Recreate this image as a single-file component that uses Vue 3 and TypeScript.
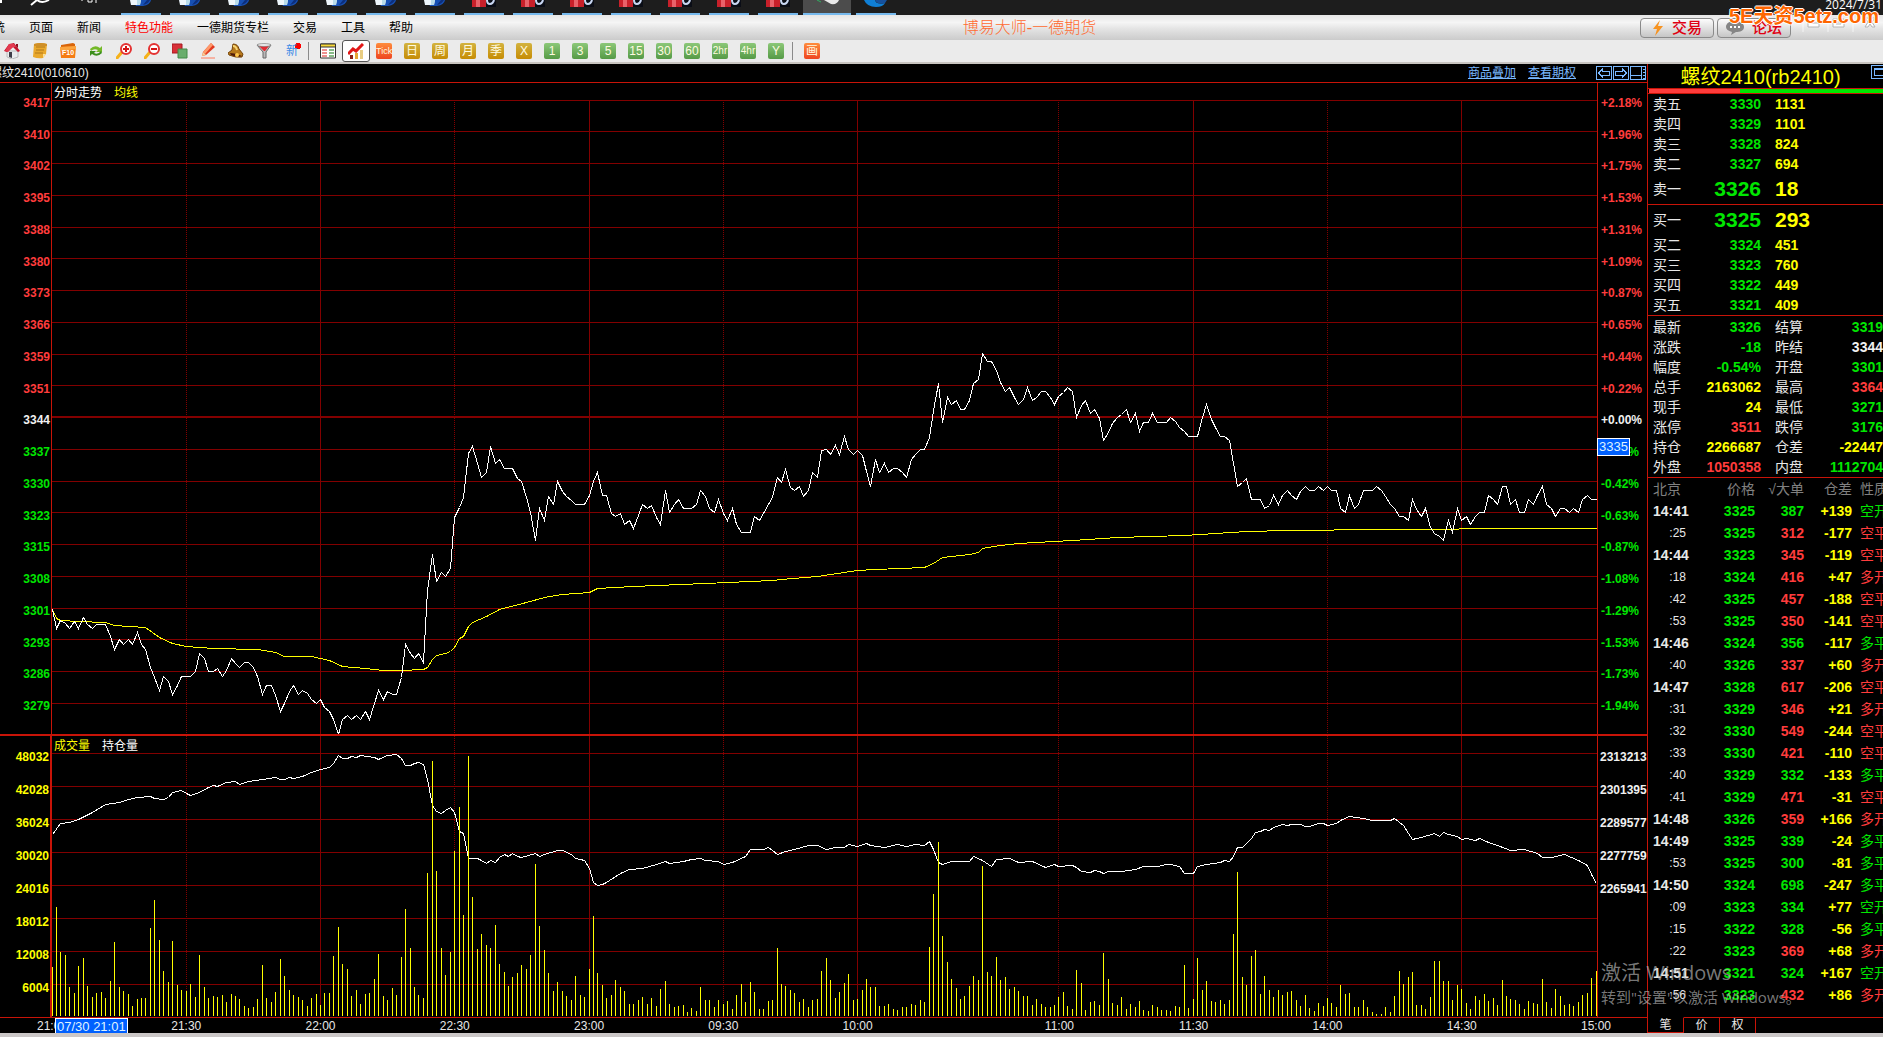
<script setup lang="ts">
interface Tick {
  time: string
  price: number
  volume: number
  up: boolean
  change: string
  kind: string
}

const PLOT_WIDTH = 1545
const LAST_MINUTE = 345

const menuItems = ['系统', '页面', '新闻', '特色功能', '一德期货专栏', '交易', '工具', '帮助']

const taskItems = [
  ...Array.from({ length: 7 }, () => 'doc'),
  ...Array.from({ length: 7 }, () => 'terminal'),
  'chat',
  'edge',
]

const periods = [
  { label: 'Tick', tone: 'red', size: 'slim' },
  { label: '日', tone: 'gold', size: 'wide' },
  { label: '周', tone: 'gold', size: 'wide' },
  { label: '月', tone: 'gold', size: 'wide' },
  { label: '季', tone: 'gold', size: 'wide' },
  { label: 'X', tone: 'gold', size: 'wide' },
  { label: '1', tone: 'green', size: 'wide' },
  { label: '3', tone: 'green', size: 'wide' },
  { label: '5', tone: 'green', size: 'wide' },
  { label: '15', tone: 'green', size: 'wide' },
  { label: '30', tone: 'green', size: 'wide' },
  { label: '60', tone: 'green', size: 'wide' },
  { label: '2hr', tone: 'green', size: 'mid' },
  { label: '4hr', tone: 'green', size: 'mid' },
  { label: 'Y', tone: 'green', size: 'wide' },
]

const tools = ['home', 'note', 'f10', 'refresh', 'zoomin', 'zoomout', 'overlay', 'pencil', 'bell', 'filter', 'new']
const toolNames: Record<string, string> = {
  home: '首页', note: '便笺', f10: 'F10 资料', refresh: '刷新', zoomin: '放大', zoomout: '缩小',
  overlay: '叠加', pencil: '画线', bell: '预警', filter: '筛选', new: '新品',
}

const priceLabels = [3417, 3410, 3402, 3395, 3388, 3380, 3373, 3366, 3359, 3351, 3344, 3337, 3330, 3323, 3315, 3308, 3301, 3293, 3286, 3279]
const percentLabels = ['+2.18%', '+1.96%', '+1.75%', '+1.53%', '+1.31%', '+1.09%', '+0.87%', '+0.65%', '+0.44%', '+0.22%', '+0.00%', '-0.22%', '-0.42%', '-0.63%', '-0.87%', '-1.08%', '-1.29%', '-1.53%', '-1.73%', '-1.94%']
const volumeLabels = [48032, 42028, 36024, 30020, 24016, 18012, 12008, 6004]
const interestLabels = ['2313213', '2301395', '2289577', '2277759', '2265941', '', '', '']

const priceRows = [100, 131, 163, 195, 227, 258, 290, 322, 354, 385, 449, 481, 512, 544, 576, 608, 639, 671, 703]
const volumeRows = [753, 786, 819, 852, 885, 918, 951, 984]

const timeTicks = [
  { label: '21:00', gap: 0 },
  { label: '21:30', gap: 30 },
  { label: '22:00', gap: 30 },
  { label: '22:30', gap: 30 },
  { label: '23:00', gap: 30 },
  { label: '09:30', gap: 30 },
  { label: '10:00', gap: 30 },
  { label: '11:00', gap: 45 },
  { label: '11:30', gap: 30 },
  { label: '14:00', gap: 30 },
  { label: '14:30', gap: 30 },
  { label: '15:00', gap: 30 },
]
const solidMinutes = [60, 120, 180, 255, 315]
const dottedMinutes = [30, 90, 150, 225, 285]

// One entry per trading minute, on the vertical scale of the price pane.
const priceLine = [
  609, 628, 620, 623, 628, 621, 628, 617, 624, 628, 624, 624, 624, 636, 649, 639, 644, 639, 644, 632,
  644, 649, 667, 677, 690, 676, 681, 694, 685, 676, 676, 676, 671, 653, 658, 671, 671, 668, 676, 670,
  658, 663, 667, 662, 662, 667, 676, 694, 685, 685, 695, 711, 703, 691, 685, 694, 690, 693, 699, 703,
  699, 707, 711, 719, 734, 719, 715, 719, 715, 719, 711, 719, 703, 690, 699, 691, 694, 694, 677, 644,
  653, 658, 653, 662, 590, 554, 581, 572, 576, 568, 517, 507, 497, 453, 446, 463, 477, 472, 446, 463,
  459, 468, 468, 468, 478, 481, 497, 512, 540, 508, 520, 496, 504, 481, 491, 496, 500, 504, 504, 504,
  495, 481, 472, 495, 495, 513, 516, 513, 524, 520, 528, 515, 504, 508, 505, 517, 524, 490, 512, 504,
  499, 508, 508, 508, 504, 490, 496, 508, 512, 499, 513, 520, 508, 524, 532, 532, 532, 516, 520, 513,
  504, 497, 477, 482, 469, 487, 490, 486, 496, 490, 472, 477, 450, 449, 454, 445, 454, 436, 449, 454,
  450, 455, 471, 486, 459, 472, 463, 472, 468, 468, 472, 477, 459, 454, 449, 449, 437, 410, 383, 422,
  397, 404, 400, 409, 409, 400, 383, 379, 353, 361, 361, 370, 382, 391, 387, 397, 404, 399, 387, 400,
  397, 391, 391, 397, 404, 396, 392, 387, 391, 417, 405, 400, 413, 409, 418, 440, 432, 423, 417, 414,
  409, 422, 413, 431, 422, 422, 413, 422, 422, 422, 417, 421, 427, 431, 436, 436, 436, 417, 404, 419,
  427, 436, 436, 440, 463, 486, 482, 478, 499, 499, 499, 508, 505, 495, 504, 495, 490, 495, 499, 491,
  486, 490, 490, 486, 490, 486, 490, 490, 508, 512, 495, 508, 504, 490, 490, 490, 486, 490, 496, 504,
  508, 516, 516, 520, 499, 509, 516, 508, 527, 533, 536, 540, 520, 532, 508, 520, 516, 524, 516, 512,
  512, 495, 499, 504, 486, 486, 504, 499, 512, 512, 499, 504, 495, 486, 504, 508, 516, 508, 508, 512,
  508, 512, 499, 495, 499, 499,
]

// [minute, position] pairs for the slow-moving lines.
const averageLine: [number, number][] = [
  [0, 609], [1, 618], [2, 620], [6, 621], [12, 622], [14, 625], [21, 627], [24, 637], [27, 643], [30, 646],
  [36, 648], [46, 649], [50, 652], [52, 656], [58, 656], [60, 658], [62, 660], [65, 666], [70, 668], [74, 670],
  [78, 670], [83, 669], [84, 667], [85, 659], [86, 655], [88, 653], [89, 651], [90, 647], [91, 638], [92, 636],
  [93, 626], [94, 622], [97, 616], [100, 609], [106, 602], [110, 597], [114, 594], [120, 592], [122, 588],
  [130, 586], [146, 583], [161, 580], [163, 579], [171, 576], [174, 574], [180, 570], [184, 569], [195, 567],
  [197, 563], [199, 557], [205, 554], [207, 552], [208, 548], [212, 545], [216, 543], [228, 540], [238, 537],
  [253, 535], [267, 531], [276, 530], [297, 529], [332, 528], [345, 528],
]
const interestLine: [number, number][] = [
  [0, 834], [2, 823], [4, 822], [6, 819], [9, 812], [12, 804], [15, 802], [17, 799], [19, 797], [22, 796],
  [23, 798], [25, 799], [26, 797], [27, 792], [29, 790], [30, 793], [31, 795], [33, 792], [35, 787], [36, 785],
  [37, 786], [39, 782], [41, 781], [42, 784], [44, 781], [47, 779], [50, 777], [51, 779], [52, 779], [53, 777],
  [54, 778], [56, 776], [58, 772], [60, 769], [62, 767], [63, 763], [64, 755], [65, 758], [66, 758], [67, 756],
  [68, 757], [69, 755], [72, 757], [73, 759], [75, 755], [77, 754], [78, 758], [79, 765], [80, 765], [81, 763],
  [82, 762], [83, 764], [84, 779], [85, 805], [86, 811], [87, 813], [88, 810], [89, 807], [90, 812], [91, 831],
  [92, 833], [93, 858], [95, 858], [96, 860], [97, 863], [98, 860], [99, 862], [100, 857], [101, 854], [102, 856],
  [103, 853], [104, 856], [105, 857], [108, 853], [109, 856], [110, 854], [113, 850], [114, 850], [116, 854],
  [117, 858], [118, 859], [119, 860], [120, 868], [121, 882], [122, 885], [123, 884], [124, 882], [127, 873],
  [129, 869], [132, 868], [135, 864], [137, 861], [138, 863], [141, 861], [143, 859], [145, 858], [146, 860],
  [149, 861], [150, 864], [152, 862], [155, 856], [156, 849], [159, 849], [160, 847], [161, 850], [162, 854],
  [164, 851], [166, 849], [169, 845], [171, 845], [173, 849], [175, 847], [177, 847], [178, 844], [180, 846],
  [182, 843], [183, 845], [186, 847], [189, 844], [191, 846], [193, 844], [195, 845], [196, 841], [197, 849],
  [198, 862], [199, 864], [201, 861], [205, 861], [206, 856], [208, 860], [210, 866], [211, 859], [214, 858],
  [216, 862], [219, 861], [222, 867], [224, 864], [225, 866], [228, 865], [229, 867], [230, 871], [232, 872],
  [233, 870], [234, 871], [235, 873], [236, 871], [239, 871], [242, 869], [244, 866], [247, 866], [249, 864],
  [250, 864], [252, 866], [253, 873], [255, 873], [256, 866], [258, 864], [261, 862], [262, 860], [263, 861],
  [264, 856], [265, 847], [266, 847], [268, 838], [269, 832], [270, 831], [271, 829], [272, 830], [273, 827],
  [275, 824], [276, 825], [277, 824], [279, 824], [280, 826], [281, 826], [283, 823], [284, 823], [285, 825],
  [287, 823], [288, 820], [290, 816], [293, 818], [295, 820], [299, 820], [300, 818], [302, 825], [303, 833],
  [304, 839], [305, 838], [306, 837], [309, 833], [310, 836], [311, 832], [312, 834], [314, 836], [315, 839],
  [316, 838], [318, 840], [319, 838], [321, 842], [323, 845], [326, 850], [329, 849], [332, 853], [333, 857],
  [335, 857], [338, 854], [341, 860], [343, 865], [344, 874], [345, 883],
]
const volumes = [
  49, 109, 64, 61, 29, 23, 50, 58, 30, 19, 23, 24, 18, 35, 74, 29, 25, 22, 10, 17,
  18, 18, 88, 116, 76, 45, 34, 75, 31, 26, 25, 32, 19, 61, 29, 18, 20, 19, 21, 14,
  22, 20, 17, 10, 8, 9, 17, 51, 18, 14, 24, 57, 40, 26, 21, 19, 16, 10, 18, 22,
  11, 23, 23, 60, 89, 52, 47, 20, 26, 12, 22, 23, 37, 62, 20, 16, 28, 21, 59, 107,
  68, 29, 21, 18, 143, 255, 145, 68, 41, 64, 165, 209, 101, 260, 119, 67, 82, 71, 68, 91,
  52, 44, 30, 39, 43, 51, 47, 61, 152, 90, 66, 43, 25, 34, 25, 20, 16, 40, 21, 19,
  47, 100, 43, 31, 18, 21, 36, 29, 25, 12, 12, 16, 19, 12, 18, 10, 27, 35, 12, 9,
  10, 11, 4, 8, 5, 29, 16, 16, 9, 16, 12, 15, 7, 21, 32, 14, 34, 24, 7, 7,
  15, 16, 68, 32, 30, 26, 23, 14, 17, 9, 16, 17, 45, 58, 36, 18, 24, 33, 42, 16,
  17, 26, 37, 29, 29, 10, 10, 12, 7, 6, 9, 9, 12, 11, 16, 14, 69, 122, 174, 80,
  54, 37, 28, 17, 20, 30, 40, 36, 150, 44, 40, 59, 36, 39, 27, 29, 25, 20, 20, 11,
  17, 12, 9, 9, 11, 19, 24, 10, 7, 46, 33, 6, 14, 15, 11, 63, 37, 13, 11, 19,
  7, 12, 9, 15, 6, 5, 11, 9, 6, 6, 5, 10, 9, 51, 8, 17, 58, 26, 35, 15,
  14, 16, 12, 16, 82, 144, 39, 31, 60, 66, 22, 40, 26, 19, 26, 21, 24, 25, 16, 10,
  21, 8, 5, 13, 10, 18, 13, 9, 31, 22, 23, 9, 9, 16, 9, 4, 2, 2, 9, 4,
  20, 45, 32, 39, 44, 11, 11, 7, 19, 55, 55, 35, 35, 16, 31, 27, 13, 7, 20, 16,
  22, 15, 18, 11, 36, 20, 17, 16, 12, 7, 15, 13, 12, 37, 14, 8, 27, 20, 11, 12,
  10, 14, 21, 23, 38, 45,
]

const minuteX = (minute: number): number => Math.floor((minute * (PLOT_WIDTH - 1)) / LAST_MINUTE) + 0.5
const toPoints = (pairs: [number, number][]): string =>
  pairs.map(([minute, y]) => `${minuteX(minute)},${y + 0.5}`).join(' ')

const pricePoints = toPoints(priceLine.map((y, i): [number, number] => [i, y]))
const averagePoints = toPoints(averageLine)
const interestPoints = toPoints(interestLine)
const volumePath = volumes.map((h, i) => `M${minuteX(i)} 1016V${1016 - h}`).join('')

const toneOf = (index: number): string => (index < 10 ? 'up' : index === 10 ? 'flat' : 'down')

const asks = [
  { name: '卖五', price: 3330, volume: 1131 },
  { name: '卖四', price: 3329, volume: 1101 },
  { name: '卖三', price: 3328, volume: 824 },
  { name: '卖二', price: 3327, volume: 694 },
  { name: '卖一', price: 3326, volume: 18 },
]
const bids = [
  { name: '买一', price: 3325, volume: 293 },
  { name: '买二', price: 3324, volume: 451 },
  { name: '买三', price: 3323, volume: 760 },
  { name: '买四', price: 3322, volume: 449 },
  { name: '买五', price: 3321, volume: 409 },
]
const stats = [
  ['最新', '3326', 'down', '结算', '3319', 'down'],
  ['涨跌', '-18', 'down', '昨结', '3344', 'flat'],
  ['幅度', '-0.54%', 'down', '开盘', '3301', 'down'],
  ['总手', '2163062', 'sum', '最高', '3364', 'up'],
  ['现手', '24', 'sum', '最低', '3271', 'down'],
  ['涨停', '3511', 'up', '跌停', '3176', 'down'],
  ['持仓', '2266687', 'sum', '仓差', '-22447', 'sum'],
  ['外盘', '1050358', 'up', '内盘', '1112704', 'down'],
]

const tick = (time: string, price: number, volume: number, up: boolean, change: string, kind: string): Tick =>
  ({ time, price, volume, up, change, kind })
const ticks: Tick[] = [
  tick('14:41', 3325, 387, false, '+139', '空开'),
  tick(':25', 3325, 312, true, '-177', '空平'),
  tick('14:44', 3323, 345, true, '-119', '空平'),
  tick(':18', 3324, 416, true, '+47', '多开'),
  tick(':42', 3325, 457, true, '-188', '空平'),
  tick(':53', 3325, 350, true, '-141', '空平'),
  tick('14:46', 3324, 356, false, '-117', '多平'),
  tick(':40', 3326, 337, true, '+60', '多开'),
  tick('14:47', 3328, 617, true, '-206', '空平'),
  tick(':31', 3329, 346, true, '+21', '多开'),
  tick(':32', 3330, 549, true, '-244', '空平'),
  tick(':33', 3330, 421, true, '-110', '空平'),
  tick(':40', 3329, 332, false, '-133', '多平'),
  tick(':41', 3329, 471, true, '-31', '空平'),
  tick('14:48', 3326, 359, true, '+166', '多开'),
  tick('14:49', 3325, 339, false, '-24', '多平'),
  tick(':53', 3325, 300, false, '-81', '多平'),
  tick('14:50', 3324, 698, false, '-247', '多平'),
  tick(':09', 3323, 334, false, '+77', '空开'),
  tick(':15', 3322, 328, false, '-56', '多平'),
  tick(':22', 3323, 369, true, '+68', '多开'),
  tick('14:51', 3321, 324, false, '+167', '空开'),
  tick(':56', 3323, 432, true, '+86', '多开'),
]
</script>

<template>
  <div class="screen">
    <div class="taskbar">
      <svg class="task-left" viewBox="0 0 116 15" aria-hidden="true">
        <path d="M0 0h2v3H0z" fill="#fff" />
        <path d="M31 5l6-5M37 0q5 4 12 0" fill="none" stroke="#fff" stroke-width="2" />
        <path d="M82 0v1M88 0v2h4V0M96 0v3" fill="none" stroke="#fff" />
      </svg>
      <div v-for="(item, i) in taskItems" :key="i" class="task" :class="item">
        <svg v-if="item === 'doc'" viewBox="0 0 48 13" aria-hidden="true">
          <path d="M16 0h18q-1 5-8 6h-7z" fill="#1750b4" />
          <path d="M26 5q5-1 7-5h-3z" fill="#0d2f7d" />
          <path d="M13 0h11l-1 5H14z" fill="#eef6fb" />
          <path d="M20 0h4l-1 5h-3z" fill="#b9dcea" />
        </svg>
        <svg v-else-if="item === 'terminal'" viewBox="0 0 48 13" aria-hidden="true">
          <path d="M12 0h14v7H12z" fill="#c8202a" />
          <path d="M16 0h4v7h-4z" fill="#e8626a" />
          <path d="M26 0h10v7H26z" fill="#0a0d16" />
          <path d="M27 0q0 4 3 4t4-4" fill="none" stroke="#c9d7f2" stroke-width="2" />
        </svg>
        <svg v-else-if="item === 'chat'" viewBox="0 0 48 13" aria-hidden="true">
          <path d="M14 0l4 2" stroke="#2fae60" />
          <path d="M21 0h15q-2 5-8 4z" fill="#e9e9e9" />
        </svg>
        <svg v-else viewBox="0 0 48 13" aria-hidden="true">
          <path d="M12 0q3 7 12 7 7 0 9-4-9 2-10-3z" fill="#0f7fd6" />
          <path d="M23 0q2 5 10 3l2-3z" fill="#17519d" />
        </svg>
      </div>
      <time class="clock">2024/7/31</time>
    </div>

    <header class="menubar">
      <nav class="menu">
        <a v-for="item in menuItems" :key="item" href="#" :class="{ hot: item === '特色功能' }">{{ item }}</a>
      </nav>
      <h1>博易大师-一德期货</h1>
      <div class="top-actions">
        <button type="button">
          <svg width="12" height="16" viewBox="0 0 12 16" aria-hidden="true"><path d="M8 0L1 9h4l-2 7 8-10H6z" fill="#f79320" /></svg>
          交易
        </button>
        <button type="button">
          <svg width="18" height="14" viewBox="0 0 18 14" aria-hidden="true">
            <path d="M9 0c5 0 9 2 9 6s-4 5-8 5l-5 3 1-3C2 10 0 8 0 6c0-4 4-6 9-6z" fill="#858585" />
            <path d="M4 5h2v2H4zM8 5h2v2H8zM12 5h2v2h-2z" fill="#fff" />
          </svg>
          论坛
        </button>
        <svg class="window-marks" width="89" height="25" viewBox="0 0 89 25" aria-hidden="true">
          <path d="M9 3v14M34 3v14M59 3v14" stroke="#fff" opacity=".7" />
          <path d="M14 8h11v4H14zM39 4h11v8H39zM42 7h5v2h-5zM71 3h3l2 3 2-3h3l-3 4 3 5h-3l-2-3-2 3h-3l3-5z" fill="#fff" stroke="#b4b4b4" />
        </svg>
      </div>
      <div class="brand">5E天资5etz.com</div>
    </header>

    <div class="toolbar">
      <button v-for="tool in tools" :key="tool" type="button" class="tool" :aria-label="toolNames[tool]">
        <svg v-if="tool === 'home'" viewBox="0 0 16 16"><path d="M3 8h11v6l-6 2-5-2z" fill="#e9ecee" stroke="#9a9a9a" stroke-width=".6" /><path d="M0 8l5-7 5-1 6 8-2 1-5-5-6 5z" fill="#c4152c" /><path d="M5 1l5 0 2 3-3 0-5 5-3-1z" fill="#e43a50" /><path d="M5 9h3v6l-3-1z" fill="#3d3d48" /><path d="M12 1h2v4l-2-2z" fill="#8c1020" /></svg>
        <svg v-else-if="tool === 'note'" viewBox="0 0 16 16"><path d="M2 1q7-2 13 0l-1 10-3 4q-5 1-10-1z" fill="#e9a82c" /><path d="M4 4h9M4 7h8M3 10h8" stroke="#b0781a" /><path d="M14 11l-3 4v-4z" fill="#fbe19a" /><path d="M2 1q7-2 13 0v2H2z" fill="#cf8f28" /></svg>
        <svg v-else-if="tool === 'f10'" viewBox="0 0 16 16"><path d="M1 2l12-2 2 1v4H1z" fill="#d86409" /><path d="M0 4l16-1-1 12H1z" fill="#f57c14" /><path d="M0 4l16-1v3L0 8z" fill="#fba53f" /><text x="8" y="12" text-anchor="middle" class="f10-text">F10</text></svg>
        <svg v-else-if="tool === 'refresh'" viewBox="0 0 16 16"><path d="M2 6q5-5 10-1l2-2v6H8l2-2Q6 5 3 8z" fill="#74b928" /><path d="M14 10q-5 5-10 1l-2 2V8h6L6 10q4 2 7-2z" fill="#3b8e1c" /></svg>
        <svg v-else-if="tool === 'zoomin' || tool === 'zoomout'" viewBox="0 0 16 16"><path d="M1 15l5-6" stroke="#f5b21a" stroke-width="3" stroke-linecap="round" /><circle cx="10" cy="6" r="5" fill="#fff" stroke="#e43333" stroke-width="2" /><path d="M7 6h6" stroke="#d41414" stroke-width="2" /><path v-if="tool === 'zoomin'" d="M10 3v6" stroke="#d41414" stroke-width="2" /></svg>
        <svg v-else-if="tool === 'overlay'" viewBox="0 0 16 16"><path d="M0 1h10v9H0z" fill="#d83038" stroke="#a61820" /><path d="M6 6h9v9H6z" fill="#69ad6d" stroke="#438a49" /></svg>
        <svg v-else-if="tool === 'pencil'" viewBox="0 0 16 16"><path d="M11 0l4 4-9 8-4 1 1-4z" fill="#e23a20" /><path d="M11 0l2 2-8 9-2-2z" fill="#ff9a6a" /><path d="M3 9l3 3-4 1z" fill="#f7cf95" /><path d="M1 15h14" stroke="#ff7a5c" /></svg>
        <svg v-else-if="tool === 'bell'" viewBox="0 0 16 16"><path d="M5 1q5 0 6 5l4 5-1 3q-6 1-13-2l-1-2 4-3z" fill="#b7791c" stroke="#75450a" /><path d="M5 3q3 0 4 4" stroke="#f7d675" fill="none" stroke-width="2" /><path d="M2 10q6 0 12 3-5 2-11-1z" fill="#4e1a0b" /><circle cx="9" cy="12" r="2" fill="#ffc74c" /></svg>
        <svg v-else-if="tool === 'filter'" viewBox="0 0 16 16"><path d="M1 2h14l-5 7v6H7V9z" fill="#b9b9b9" stroke="#696969" /><path d="M3 3h10L9 8H8z" fill="#e22b32" /><ellipse cx="8" cy="2" rx="7" ry="1.5" fill="#e8e8e8" stroke="#777" stroke-width=".6" /></svg>
        <span v-else class="new-mark">新</span>
      </button>
      <span class="divider"></span>
      <button type="button" class="tool" aria-label="报价表">
        <svg viewBox="0 0 16 16"><path d="M.5 1h15v14H.5z" fill="#fff" stroke="#333" /><path d="M.5 1h15v3H.5z" fill="#f7d83a" stroke="#333" /><path d="M2 7h5M2 10h5M2 13h5" stroke="#d22" /><path d="M9 7h5M9 10h5M9 13h5" stroke="#171" /></svg>
      </button>
      <button type="button" class="tool active" aria-label="分时图">
        <svg viewBox="0 0 16 16"><path d="M2 12h3v4H2z" fill="#8d1f14" /><path d="M7 10h3v6H7z" fill="#e7a536" /><path d="M12 7h3v9h-3z" fill="#e9cd82" /><path d="M0 11l5-5 3 2 7-7" fill="none" stroke="#e11717" stroke-width="3" /></svg>
      </button>
      <button v-for="p in periods" :key="p.label" type="button" class="tool">
        <span class="period" :class="[p.tone, p.size]">{{ p.label }}</span>
      </button>
      <span class="divider"></span>
      <button type="button" class="tool"><span class="period red wide">画</span></button>
    </div>

    <main class="body">
      <section class="chart">
        <div class="chart-title">
          <span class="contract">螺纹2410(010610)</span>
          <a href="#">商品叠加</a>
          <a href="#">查看期权</a>
          <svg width="51" height="15" viewBox="0 0 51 15" fill="none" stroke="#7ab8ff" shape-rendering="crispEdges" aria-hidden="true">
            <path d="M.5.5h15v13H.5zM17.5.5h15v13h-15zM34.5.5h15v13h-15z" />
            <path d="M2.5 7l4-4v2h7v4h-7v2zM30.5 7l-4-4v2h-7v4h7v2zM35 9.5h10M45.5 1v13M47 3.5h3M47 6.5h3M47 9.5h3M47 12.5h3" />
          </svg>
        </div>

        <div class="panes">
          <div class="axis left price-axis">
            <span v-for="(p, i) in priceLabels" :key="p" :class="toneOf(i)">{{ p }}</span>
          </div>
          <div class="plot price-plot">
            <svg viewBox="0 83 1545 651" preserveAspectRatio="none" aria-label="分时走势">
              <g class="grid">
                <path v-for="y in priceRows" :key="y" :d="`M0 ${y + 0.5}H1545`" />
                <path class="base" d="M0 417H1545" />
                <path v-for="m in solidMinutes" :key="m" :d="`M${minuteX(m)} 100V734`" />
                <path v-for="m in dottedMinutes" :key="m" class="dotted" :d="`M${minuteX(m)} 102V734`" />
              </g>
              <polyline class="line yellow" :points="averagePoints" />
              <polyline class="line" :points="pricePoints" />
            </svg>
            <div class="legend"><span>分时走势</span><span class="sum">均线</span></div>
          </div>
          <div class="axis right price-axis">
            <span v-for="(p, i) in percentLabels" :key="p" :class="toneOf(i)">{{ p }}</span>
            <output class="price-tag">3335</output>
          </div>

          <div class="axis left volume-axis">
            <span v-for="v in volumeLabels" :key="v" class="sum">{{ v }}</span>
          </div>
          <div class="plot volume-plot">
            <svg viewBox="0 736 1545 281" preserveAspectRatio="none" aria-label="成交量">
              <g class="grid">
                <path v-for="y in volumeRows" :key="y" :d="`M0 ${y + 0.5}H1545`" />
                <path v-for="m in solidMinutes" :key="m" :d="`M${minuteX(m)} 736V1017`" />
                <path v-for="m in dottedMinutes" :key="m" class="dotted" :d="`M${minuteX(m)} 736V1017`" />
              </g>
              <polyline class="line" :points="interestPoints" />
              <path class="line yellow" :d="volumePath" />
            </svg>
            <div class="legend"><span class="sum">成交量</span><span>持仓量</span></div>
          </div>
          <div class="axis right volume-axis">
            <span v-for="(v, i) in interestLabels" :key="i" class="flat">{{ v }}</span>
          </div>
        </div>

        <div class="time-axis">
          <div v-for="t in timeTicks" :key="t.label" class="time" :style="{ flexGrow: t.gap }">
            <span>{{ t.label }}</span>
          </div>
          <output class="time-tag">07/30 21:01</output>
        </div>
      </section>

      <aside class="quote-panel">
        <div class="quote-title">
          <h2>螺纹2410(rb2410)</h2>
          <svg width="16" height="14" viewBox="0 0 16 14" fill="none" stroke="#7ab8ff" shape-rendering="crispEdges" aria-hidden="true">
            <path d="M.5.5h18v13H.5zM18 3.5H3.5v7H18" /><path d="M4 4.5h12" />
          </svg>
        </div>
        <div class="ratio"><span class="sell"></span><span class="buy"></span></div>

        <table class="book asks">
          <tbody>
            <tr v-for="row in asks" :key="row.name" :class="{ best: row.name === '卖一' }">
              <th scope="row">{{ row.name }}</th>
              <td class="down">{{ row.price }}</td>
              <td class="sum size">{{ row.volume }}</td>
            </tr>
          </tbody>
        </table>
        <table class="book bids">
          <tbody>
            <tr v-for="row in bids" :key="row.name" :class="{ best: row.name === '买一' }">
              <th scope="row">{{ row.name }}</th>
              <td class="down">{{ row.price }}</td>
              <td class="sum size">{{ row.volume }}</td>
            </tr>
          </tbody>
        </table>
        <table class="book stats">
          <tbody>
            <tr v-for="row in stats" :key="row[0]">
              <th scope="row">{{ row[0] }}</th>
              <td :class="row[2]">{{ row[1] }}</td>
              <th scope="row" class="second">{{ row[3] }}</th>
              <td :class="row[5]">{{ row[4] }}</td>
            </tr>
          </tbody>
        </table>

        <table class="ticks">
          <thead>
            <tr><th>北京</th><th>价格</th><th>√大单</th><th>仓差</th><th>性质</th></tr>
          </thead>
          <tbody>
            <tr v-for="(row, i) in ticks" :key="i">
              <td :class="row.time.length > 3 ? 'minute' : 'second'">{{ row.time }}</td>
              <td class="down">{{ row.price }}</td>
              <td :class="row.up ? 'up' : 'down'">{{ row.volume }}</td>
              <td class="sum">{{ row.change }}</td>
              <td class="kind" :class="row.up ? 'up' : 'down'">{{ row.kind }}</td>
            </tr>
          </tbody>
        </table>

        <div class="tabs">
          <button type="button" class="current">笔</button>
          <button type="button">价</button>
          <button type="button">权</button>
        </div>
      </aside>

      <div class="activation">
        <p>激活 Windows</p>
        <p class="hint">转到"设置"以激活 Windows。</p>
      </div>
    </main>
  </div>
</template>

<style>
body {
  margin: 0;
  background: #000;
}
</style>

<style scoped>
.screen {
  --frame: #c81408;
  --cjk: "Noto Sans CJK SC";
  display: flex;
  flex-direction: column;
  min-height: 100vh;
  overflow: hidden;
  box-sizing: border-box;
  border-bottom: 4px solid #cbc7c7;
  background: #000;
  color: #e8e8e8;
  font: 12px/16px "Liberation Sans", var(--cjk), sans-serif;
}
button {
  margin: 0;
  padding: 0;
  border: 0;
  background: none;
  font: inherit;
  color: inherit;
}
.up { color: #ff3c3c; }
.down { color: #00e600; }
.flat { color: #f0f0f0; }
.sum { color: #ffff00; }

.taskbar {
  display: flex;
  gap: 1px;
  height: 15px;
  background: #1d1d1d;
}
.task-left { width: 116px; height: 15px; flex: none; }
.task {
  width: 48px;
  height: 15px;
  flex: none;
  background: linear-gradient(#76b9ed, #76b9ed) 4px 13px / 40px 2px no-repeat;
}
.task svg { display: block; width: 48px; height: 13px; }
.task.chat {
  background: linear-gradient(#4c4c4c 13px, #76b9ed 13px);
}
.clock {
  margin-left: auto;
  padding-right: 1px;
  color: #fff;
  font: 12px/10px "Open Sans", sans-serif;
}

.menubar {
  position: relative;
  display: grid;
  grid-template-columns: 1fr auto 1fr;
  align-items: center;
  height: 25px;
  background: linear-gradient(#e6e6e6, #f5f5f5 30%, #e4e4e4 55%, #cbcbcb);
  color: #000;
}
.menu {
  display: flex;
  gap: 24px;
  margin-left: -19px;
}
.menu a { color: #000; text-decoration: none; white-space: nowrap; }
.menu a.hot { color: #f00; }
h1 {
  margin: 0 0 0 176px;
  color: #ff6a30;
  font: 300 16px/20px "Liberation Serif", var(--cjk), serif;
}
.top-actions {
  display: flex;
  justify-content: flex-end;
  align-items: center;
  gap: 3px;
}
.top-actions button {
  display: flex;
  align-items: center;
  justify-content: center;
  gap: 8px;
  box-sizing: border-box;
  width: 74px;
  height: 20px;
  border: 1px solid #8a8a8a;
  border-radius: 4px;
  background: linear-gradient(#fdfdfd, #dcdcdc 60%, #c6c6c6);
  color: #e00012;
  font-size: 15px;
  font-weight: 500;
}
.top-actions button svg { flex: none; }
.brand {
  position: absolute;
  top: -11px;
  right: 4px;
  color: #ff6600;
  font-size: 20px;
  font-weight: bold;
  line-height: 24px;
  text-shadow: 1px 0 #fff, -1px 0 #fff, 0 1px #fff, 0 -1px #fff;
}

.toolbar {
  display: flex;
  height: 22px;
  padding-right: 8px;
  border-bottom: 2px solid #c8c4c0;
  background: #ebebeb;
}
.tool {
  display: flex;
  align-items: center;
  justify-content: center;
  box-sizing: border-box;
  width: 28px;
  height: 22px;
  flex: none;
}
.tool:first-child { margin-left: -2px; }
.tool svg { width: 16px; height: 16px; }
.tool.active {
  border: 1px solid #555;
  border-radius: 3px;
  background: #fff;
}
.divider {
  width: 1px;
  height: 18px;
  margin: 2px 5px 0 2px;
  background: #8a8a8a;
}
.f10-text {
  fill: #fff;
  font: bold 7px "Liberation Sans", sans-serif;
}
.new-mark {
  color: #3c8ae6;
  background: radial-gradient(circle at 15px 3px, #f00 3px, transparent 3px);
  padding: 0 3px;
}
.period {
  display: block;
  width: 16px;
  height: 16px;
  border-radius: 2px;
  color: #fffbe0;
  line-height: 16px;
  text-align: center;
}
.period.gold { background: linear-gradient(#d3b340, #c68c04); }
.period.green { background: linear-gradient(#8cc878, #559a46); }
.period.red { background: linear-gradient(#ff8c3c, #ee4520); }
.period.mid { font-size: 10px; }
.period.slim { font-size: 9px; }

.body {
  position: relative;
  display: flex;
  flex: 1;
}
.chart {
  display: flex;
  flex-direction: column;
  flex: 1;
  min-width: 0;
}
.chart-title {
  display: flex;
  align-items: center;
  gap: 12px;
  height: 18px;
  border-bottom: 1px solid var(--frame);
}
.contract { margin-left: -10px; margin-right: auto; }
.chart-title a { color: #7ab8ff; }
.chart-title svg { margin-left: 8px; }

.panes {
  display: grid;
  grid-template-columns: 52px minmax(0, 1fr) 50px;
  grid-template-rows: 653fr 281fr;
  flex: 1;
}
.axis {
  position: relative;
  display: flex;
  flex-direction: column;
  font-weight: bold;
}
.axis span {
  display: flex;
  align-items: center;
  flex: 1;
}
.axis.left { border-right: 1px solid var(--frame); }
.axis.left span { justify-content: flex-end; padding-right: 1px; }
.axis.right { border-left: 1px solid var(--frame); padding-left: 2px; }
.price-axis {
  padding-top: 4px;
  padding-bottom: 12px;
  border-bottom: 2px solid var(--frame);
}
.volume-axis {
  padding-top: 4px;
  padding-bottom: 13px;
}
.axis.left.volume-axis { border-right-width: 2px; }
.axis.right.price-axis span { padding-left: 1px; }
.plot { position: relative; }
.plot svg { display: block; position: absolute; width: 100%; height: 100%; }
.price-plot { border-bottom: 2px solid var(--frame); }
.legend {
  position: relative;
  display: flex;
  gap: 12px;
  padding: 2px 0 0 2px;
  color: #fff;
}
.grid path { stroke: #820000; fill: none; shape-rendering: crispEdges; }
.grid .base { stroke-width: 2; }
.grid .dotted { stroke-dasharray: 1 1; }
.line { fill: none; stroke: #fff; shape-rendering: crispEdges; }
.line.yellow { stroke: #ffff00; }
.price-tag {
  position: absolute;
  top: 355px;
  left: -1px;
  padding: 0 1px;
  border: 1px solid #fff;
  background: #0060ff;
  color: #dff3ff;
  font-size: 13px;
  font-weight: normal;
}

.time-axis {
  position: relative;
  display: flex;
  height: 15px;
  padding: 0 51px 0 52px;
  border-top: 1px solid var(--frame);
  overflow: hidden;
}
.time {
  display: flex;
  justify-content: flex-end;
  flex: 0 0 0;
  width: 0;
}
.time span { flex: none; margin-right: -15px; }
.time-tag {
  position: absolute;
  top: 0;
  left: 55px;
  padding: 0 1px;
  border: 1px solid #fff;
  background: #0060ff;
  color: #dff3ff;
  font-size: 13px;
}

.quote-panel {
  display: flex;
  flex-direction: column;
  width: 235px;
  flex: none;
  border-left: 1px solid var(--frame);
  overflow: hidden;
}
.quote-title {
  display: flex;
  justify-content: flex-end;
  height: 24px;
}
.quote-title h2 {
  margin: 0 auto;
  padding-left: 2px;
  color: #ffff00;
  font-size: 20px;
  font-weight: normal;
  line-height: 26px;
}
.quote-title svg { margin-top: 1px; flex: none; margin-right: -4px; }
.ratio {
  display: flex;
  height: 4px;
  padding-left: 1px;
  border: solid var(--frame);
  border-width: 1px 0;
}
.ratio .sell { flex: 91; background: #ff3c3c; }
.ratio .buy { flex: 143; background: #00e600; }

table {
  border-collapse: collapse;
  border-spacing: 0;
  font-size: 14px;
  font-weight: bold;
}
th, td { flex: none; padding: 0; text-align: right; white-space: nowrap; }
th { font-weight: normal; }
.book { display: block; border-bottom: 1px solid var(--frame); }
.book tbody { display: block; }
.book tr { display: flex; height: 20px; line-height: 20px; }
.book th { width: 45px; padding-left: 5px; text-align: left; }
.book td { width: 63px; }
.book .size { padding-left: 14px; text-align: left; }
.book .second { width: 46px; padding-left: 14px; }
.book .second + td { width: 62px; }
.book tr.best { height: 30px; line-height: 30px; }
.book tr.best td { font-size: 21px; }
.stats { padding: 1px 0 0; }

.ticks { display: block; flex: 1; }
.ticks thead, .ticks tbody { display: block; }
.ticks tr { display: flex; height: 22px; line-height: 22px; }
.ticks th { color: #808080; }
.ticks tr > :nth-child(1) { width: 38px; padding-left: 5px; text-align: left; }
.ticks tr > :nth-child(2) { width: 64px; }
.ticks tr > :nth-child(3) { width: 49px; }
.ticks tr > :nth-child(4) { width: 48px; }
.ticks tr > :nth-child(5) { padding-left: 8px; }
.ticks .kind { font-weight: normal; }
.ticks tr > .second { width: 33px; padding-right: 5px; font-size: 12px; font-weight: normal; text-align: right; }

.tabs {
  display: flex;
  height: 16px;
}
.tabs button {
  width: 36px;
  border-top: 1px solid var(--frame);
  border-right: 1px solid var(--frame);
  line-height: 15px;
}
.tabs .current {
  border-top-color: transparent;
  border-bottom: 1px solid var(--frame);
}
.tabs::after {
  content: "";
  flex: 1;
  border-top: 1px solid var(--frame);
}

.activation {
  position: absolute;
  right: 88px;
  bottom: 25px;
  color: rgba(190, 190, 190, 0.65);
  font-family: "Open Sans", var(--cjk), sans-serif;
  pointer-events: none;
}
.activation p { margin: 0; width: 194px; font-size: 20px; line-height: 26px; white-space: nowrap; }
.activation .hint { font-size: 15px; line-height: 22px; }
</style>
